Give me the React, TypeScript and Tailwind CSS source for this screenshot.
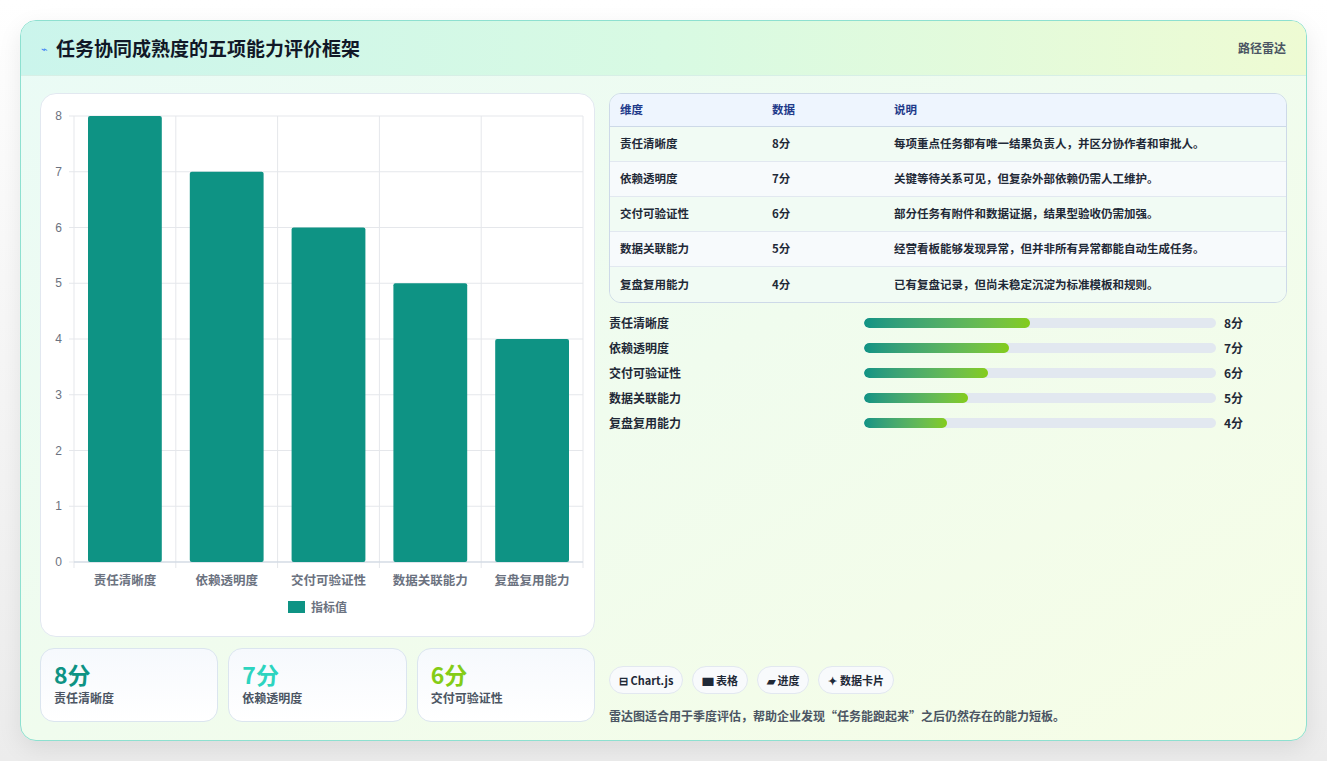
import React from "react";

const data = [
  { n: "责任清晰度", v: 8, d: "每项重点任务都有唯一结果负责人，并区分协作者和审批人。" },
  { n: "依赖透明度", v: 7, d: "关键等待关系可见，但复杂外部依赖仍需人工维护。" },
  { n: "交付可验证性", v: 6, d: "部分任务有附件和数据证据，结果型验收仍需加强。" },
  { n: "数据关联能力", v: 5, d: "经营看板能够发现异常，但并非所有异常都能自动生成任务。" },
  { n: "复盘复用能力", v: 4, d: "已有复盘记录，但尚未稳定沉淀为标准模板和规则。" },
];

function Chart() {
  const W = 552, H = 540;
  const x0 = 33, x1 = 542, y0 = 468, yTop = 22;
  const step = (y0 - yTop) / 8;
  const cw = (x1 - x0) / 5;
  return (
    <svg width={W} height={H} className="block">
      {Array.from({ length: 9 }, (_, i) => (
        <g key={i}>
          <line x1={x0 - 5} x2={x1} y1={y0 - i * step} y2={y0 - i * step} stroke="#e5e7eb" />
          <text x={21} y={y0 - i * step + 4} fontSize="12" fill="#6b7280" textAnchor="end" fontFamily="Liberation Sans, sans-serif">{i}</text>
        </g>
      ))}
      {Array.from({ length: 6 }, (_, i) => (
        <line key={i} x1={x0 + i * cw} x2={x0 + i * cw} y1={yTop} y2={y0 + 6} stroke="#e5e7eb" />
      ))}
      <line x1={x0} x2={x1} y1={y0} y2={y0} stroke="#cbd5e1" />
      {data.map((r, i) => (
        <g key={i}>
          <rect x={x0 + i * cw + 14} y={y0 - r.v * step} width={cw - 28} height={r.v * step} fill="#0e9384" rx="2" />
          <text x={x0 + i * cw + cw / 2} y={y0 + 23} fontSize="12.5" fill="#6b7280" textAnchor="middle" fontWeight="600" fontFamily="Noto Sans CJK SC, sans-serif">{r.n}</text>
        </g>
      ))}
      <rect x={247} y={507} width={17} height={12} fill="#0e9384" />
      <text x={270} y={518} fontSize="12" fill="#6b7280" fontWeight="600" fontFamily="Noto Sans CJK SC, sans-serif">指标值</text>
    </svg>
  );
}

export default function App() {
  const kpis = [
    { v: "8分", n: "责任清晰度", c: "text-[#0e9384]" },
    { v: "7分", n: "依赖透明度", c: "text-[#2dd4bf]" },
    { v: "6分", n: "交付可验证性", c: "text-[#84cc16]" },
  ];
  return (
    <div className="w-[1327px] h-[761px] bg-gradient-to-b from-white to-[#ececec] p-[20px] pb-[20px]" style={{ fontFamily: '"Noto Sans CJK SC", "Noto Sans", sans-serif' }}>
      <div className="h-[721px] rounded-[16px] border border-[#8ee0d0] overflow-hidden bg-gradient-to-br from-[#eafbf6] to-[#f6fde6] shadow-[0_8px_24px_rgba(0,0,0,0.08)] flex flex-col">
        <div className="h-[55px] flex items-center justify-between px-[20px] bg-gradient-to-r from-[#cbf5ec] via-[#d8fae3] to-[#eefbd3] border-b border-[#d7efe6]">
          <div className="flex items-center gap-[8px]">
            <span className="text-[#3b82f6] text-[11px]">⌁</span>
            <span className="text-[19px] font-bold text-[#111827]">任务协同成熟度的五项能力评价框架</span>
          </div>
          <span className="text-[12px] text-[#4b5563] font-semibold">路径雷达</span>
        </div>
        <div className="flex gap-[14px] px-[19px] pt-[17px]">
          <div className="w-[555px] flex flex-col gap-[11px]">
            <div className="h-[544px] rounded-[16px] bg-white border border-[#e2e8f0]">
              <Chart />
            </div>
            <div className="flex gap-[10px]">
              {kpis.map((k) => (
                <div key={k.n} className="flex-1 h-[74px] rounded-[14px] border border-[#dbe5ef] bg-gradient-to-b from-[#f6f9fd] to-white px-[13px] pt-[10px]">
                  <div className={`text-[23px] font-bold leading-[30px] ${k.c}`}>{k.v}</div>
                  <div className="text-[12px] text-[#4b5563] font-semibold">{k.n}</div>
                </div>
              ))}
            </div>
          </div>
          <div className="flex-1 flex flex-col">
            <div className="rounded-[12px] border border-[#cdd9e8] overflow-hidden text-[11.5px] font-semibold">
              <div className="flex h-[33px] items-center bg-[#eef5fe] border-b border-[#cdd9e8] text-[#1e3a8a]">
                <div className="w-[162px] pl-[10px]">维度</div>
                <div className="w-[122px]">数据</div>
                <div>说明</div>
              </div>
              {data.map((r, i) => (
                <div key={r.n} className={`flex h-[35px] items-center text-[#1f2937] ${i < 4 ? "border-b border-[#e2e8f0]" : ""} ${i % 2 ? "bg-[#f7fafc]" : "bg-[#f1fbf4]"}`}>
                  <div className="w-[162px] pl-[10px]">{r.n}</div>
                  <div className="w-[122px]">{r.v}分</div>
                  <div>{r.d}</div>
                </div>
              ))}
            </div>
            <div className="flex flex-col mt-[12px] gap-[9px]">
              {data.map((r) => (
                <div key={r.n} className="flex items-center h-[16px] text-[12px] font-semibold text-[#1f2937]">
                  <div className="w-[255px]">{r.n}</div>
                  <div className="w-[352px] h-[10px] rounded-full bg-[#e2e8f0] overflow-hidden">
                    <div className="h-full rounded-full bg-gradient-to-r from-[#0e9384] to-[#84cc16]" style={{ width: `${(r.v / 17) * 100}%` }} />
                  </div>
                  <div className="ml-[8px]">{r.v}分</div>
                </div>
              ))}
            </div>
            <div className="flex gap-[9px] mt-[235px]">
              {["⊟ Chart.js", "▆ 表格", "▰ 进度", "✦ 数据卡片"].map((t) => (
                <div key={t} className="h-[28px] px-[9px] rounded-full border border-[#e2e8f0] bg-[#f8fafc] flex items-center text-[11px] font-bold text-[#1f2937]">{t}</div>
              ))}
            </div>
            <div className="mt-[13px] text-[12px] font-semibold text-[#4b5563]">雷达图适合用于季度评估，帮助企业发现“任务能跑起来”之后仍然存在的能力短板。</div>
          </div>
        </div>
      </div>
    </div>
  );
}
